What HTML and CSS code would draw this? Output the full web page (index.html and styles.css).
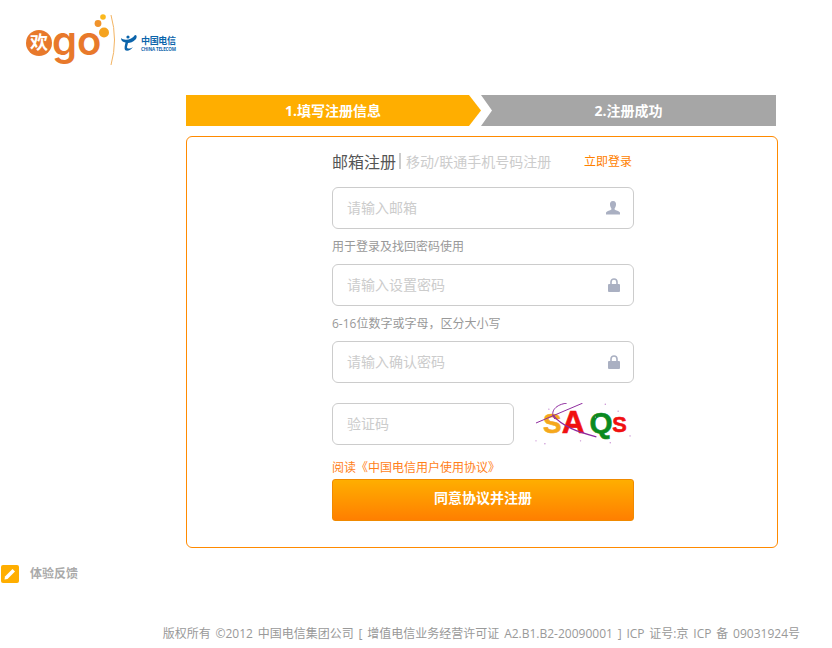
FILE: index.html
```html
<!DOCTYPE html>
<html lang="zh-CN">
<head>
    <meta charset="UTF-8">
    <meta name="viewport" content="width=device-width, initial-scale=1.0">
    <title>欢go 注册</title>
    <link rel="stylesheet" href="styles.css">
</head>
<body>
    <header class="top">
        <svg class="logo" width="180" height="70" viewBox="0 0 180 70">
            <circle cx="39" cy="43" r="13" fill="#e8792b"/>
            <text x="39" y="49" class="logo-huan">欢</text>
            <text x="52" y="55" class="logo-go">go</text>
            <circle cx="103" cy="17" r="2.8" fill="#fbb81c"/>
            <circle cx="98" cy="23.5" r="3.4" fill="#f0932b"/>
            <circle cx="104" cy="32.5" r="5" fill="#f5a31f"/>
            <path d="M111 15 Q118 40 111 65" fill="none" stroke="#f3b463" stroke-width="1"/>
            <path d="M121 38 C124 41 132 40 135 35 C137 35 137 37 136 39 C133 42 130 43 128 43 L127 47 C127 49 130 49 133 47 C131 50 127 52 125 50 C124 48 125 45 125.5 42.5 C123 42 121 41 121 38 Z" fill="#0b64ab"/>
            <circle cx="128" cy="37" r="1.6" fill="#0b64ab"/>
            <text x="141" y="44" class="logo-cn" textLength="35">中国电信</text>
            <text x="141" y="51" class="logo-en" textLength="35">CHINA TELECOM</text>
        </svg>
    </header>

    <main class="page">
        <div class="steps">
            <div class="step step-one">1.填写注册信息</div>
            <div class="step step-two">2.注册成功</div>
        </div>

        <section class="box">
            <form class="form">
                <div class="tabs">
                    <span class="tab-on">邮箱注册</span>
                    <span class="tab-line"></span>
                    <span class="tab-off">移动/联通手机号码注册</span>
                    <a class="login-link">立即登录</a>
                </div>

                <div class="field">
                    <input type="text" placeholder="请输入邮箱">
                    <svg class="icon" width="14" height="14" viewBox="0 0 14 14">
                        <path d="M7 0 C9.4 0 10.3 1.8 10 4 C9.8 5.6 9.2 6.6 8.6 7.4 L8.6 8.6 C10 9.6 13 10 14 11.4 L14 13.5 L0 13.5 L0 11.4 C1 10 4 9.6 5.4 8.6 L5.4 7.4 C4.8 6.6 4.2 5.6 4 4 C3.7 1.8 4.6 0 7 0 Z" fill="#aab0c2"/>
                    </svg>
                </div>
                <p class="hint">用于登录及找回密码使用</p>

                <div class="field">
                    <input type="password" placeholder="请输入设置密码">
                    <svg class="icon icon-lock" width="12" height="14" viewBox="0 0 12 14">
                        <path d="M3 6 L3 4 C3 2.2 4.2 1 6 1 C7.8 1 9 2.2 9 4 L9 6" fill="none" stroke="#aab0c2" stroke-width="1.6"/>
                        <rect x="0" y="6" width="12" height="8" rx="1" fill="#aab0c2"/>
                    </svg>
                </div>
                <p class="hint">6-16位数字或字母，区分大小写</p>

                <div class="field">
                    <input type="password" placeholder="请输入确认密码">
                    <svg class="icon icon-lock" width="12" height="14" viewBox="0 0 12 14">
                        <path d="M3 6 L3 4 C3 2.2 4.2 1 6 1 C7.8 1 9 2.2 9 4 L9 6" fill="none" stroke="#aab0c2" stroke-width="1.6"/>
                        <rect x="0" y="6" width="12" height="8" rx="1" fill="#aab0c2"/>
                    </svg>
                </div>

                <div class="code-row">
                    <div class="field field-code">
                        <input type="text" placeholder="验证码">
                    </div>
                    <svg class="captcha" width="100" height="42" viewBox="0 0 100 42">
                        <text x="8" y="30" class="cap cap-s">S</text>
                        <text x="27" y="30" class="cap cap-a">A</text>
                        <text x="55" y="30" class="cap cap-q">Q</text>
                        <text x="78" y="29" class="cap cap-s2">S</text>
                        <path d="M1 20 L48 0" fill="none" stroke="#8e2a9e" stroke-width="1"/>
                        <path d="M20 16 C14 8 22 1 32 0" fill="none" stroke="#8e2a9e" stroke-width="1"/>
                        <path d="M18 12 C28 24 44 29 62 34" fill="none" stroke="#8e2a9e" stroke-width="1.4"/>
                        <g fill="#c58ad0">
                            <circle cx="1" cy="38" r="0.7"/>
                            <circle cx="10" cy="41" r="0.7"/>
                            <circle cx="14" cy="6" r="0.7"/>
                            <circle cx="46" cy="38" r="0.7"/>
                            <circle cx="61" cy="14" r="0.7"/>
                            <circle cx="71" cy="1" r="0.7"/>
                            <circle cx="76" cy="40" r="0.7"/>
                            <circle cx="96" cy="33" r="0.7"/>
                            <circle cx="84" cy="8" r="0.7"/>
                        </g>
                    </svg>
                </div>

                <a class="agree">阅读《中国电信用户使用协议》</a>
                <button type="button" class="submit">同意协议并注册</button>
            </form>
        </section>
    </main>

    <div class="feedback">
        <span class="feedback-icon">
            <svg width="18" height="18" viewBox="0 0 18 18">
                <path d="M4 11.5 L11.5 4 L14 6.5 L6.5 14 L3.5 14.5 Z" fill="#fff"/>
            </svg>
        </span>
        <span class="feedback-text">体验反馈</span>
    </div>

    <footer class="foot">版权所有 ©2012 中国电信集团公司 [ 增值电信业务经营许可证 A2.B1.B2-20090001 ] ICP 证号:京 ICP 备 09031924号</footer>
</body>
</html>
```

FILE: styles.css
```css
*
{
    box-sizing: border-box;
    font-family: "Open Sans", "Noto Sans CJK SC", sans-serif;
}

body
{
    margin: 0;
    background-color: white;
    overflow: hidden;
}

.top
{
    height: 95px;
}

.logo
{
    display: block;
}

.logo-huan
{
    font-size: 18px;
    font-weight: bold;
    fill: white;
    text-anchor: middle;
}

.logo-go
{
    font-family: "Inter", sans-serif;
    font-size: 40px;
    font-weight: 600;
    fill: #e8792b;
}

.logo-cn
{
    font-size: 9px;
    font-weight: bold;
    fill: #0b64ab;
}

.logo-en
{
    font-size: 4.5px;
    font-weight: bold;
    fill: #0b64ab;
}

.page
{
    margin-left: 186px;
    width: 592px;
}

.steps
{
    display: flex;
    width: 590px;
    height: 31px;
}

.step
{
    display: flex;
    align-items: center;
    justify-content: center;
    height: 31px;
    padding-bottom: 2px;
    color: white;
    font-size: 14px;
    font-weight: bold;
}

.step-one
{
    width: 296px;
    padding-right: 2px;
    background-color: #ffae00;
    clip-path: polygon(0 0, 283px 0, 295px 50%, 283px 100%, 0 100%);
}

.step-two
{
    width: 295px;
    margin-left: -1px;
    background-color: #a6a6a6;
    clip-path: polygon(0 0, 100% 0, 100% 100%, 0 100%, 11px 50%);
}

.box
{
    margin-top: 10px;
    height: 412px;
    border: 1px solid #ff8a00;
    border-radius: 6px;
    padding: 12px 0 0 145px;
}

.form
{
    width: 302px;
}

.tabs
{
    display: flex;
    align-items: center;
    height: 24px;
    margin-bottom: 14px;
}

.tab-on
{
    font-size: 16px;
    color: #555;
}

.tab-line
{
    width: 2px;
    height: 16px;
    margin: 0 5px 0 3px;
    background-color: #ccc;
}

.tab-off
{
    font-size: 14px;
    color: #ccc;
}

.login-link
{
    margin-left: auto;
    margin-right: 2px;
    font-size: 12px;
    color: #ff7f00;
}

.field
{
    display: flex;
    align-items: center;
    width: 302px;
    height: 42px;
    padding: 0 13px 0 14px;
    border: 1px solid #ccc;
    border-radius: 6px;
    background-color: white;
}

.field input
{
    flex: 1;
    min-width: 0;
    border: none;
    outline: none;
    padding: 0 0 2px;
    font-size: 14px;
    color: #555;
}

.field input::placeholder
{
    color: #ccc;
    opacity: 1;
}

.icon
{
    flex: none;
}

.hint
{
    margin: 0;
    height: 35px;
    line-height: 35px;
    font-size: 12px;
    color: #999;
}

.code-row
{
    display: flex;
    margin-top: 20px;
}

.field-code
{
    width: 182px;
}

.captcha
{
    margin-left: 21px;
}

.cap
{
    font-family: "Liberation Sans", sans-serif;
    font-weight: bold;
    stroke-width: 0.6px;
}

.cap-s
{
    font-size: 28px;
    fill: #f5a81c;
    stroke: #f5a81c;
}

.cap-a
{
    font-size: 32px;
    fill: #f01010;
    stroke: #f01010;
}

.cap-q
{
    font-size: 30px;
    fill: #0a8a20;
    stroke: #0a8a20;
}

.cap-s2
{
    font-size: 22px;
    fill: #f01010;
    stroke: #f01010;
}

.agree
{
    display: block;
    margin-top: 15px;
    height: 19px;
    line-height: 16px;
    font-size: 12px;
    color: #ff7f1a;
}

.submit
{
    display: block;
    width: 302px;
    height: 42px;
    padding-bottom: 8px;
    border: 1px solid #f08a00;
    border-radius: 3px;
    background: linear-gradient(#ffae00, #ff7f00);
    color: white;
    font-size: 14px;
    font-weight: bold;
}

.feedback
{
    display: flex;
    align-items: center;
    gap: 11px;
    margin: 16px 0 0 1px;
    font-size: 12px;
    font-weight: bold;
    color: #aaa;
}

.feedback-icon
{
    display: flex;
    width: 18px;
    height: 18px;
    border-radius: 2px;
    background-color: #ffae00;
}

.feedback-text
{
    padding-bottom: 2px;
}

.foot
{
    margin: 41px 32px 0 0;
    text-align: right;
    font-size: 12px;
    line-height: 18px;
    word-spacing: 1.7px;
    color: #999;
}
```
